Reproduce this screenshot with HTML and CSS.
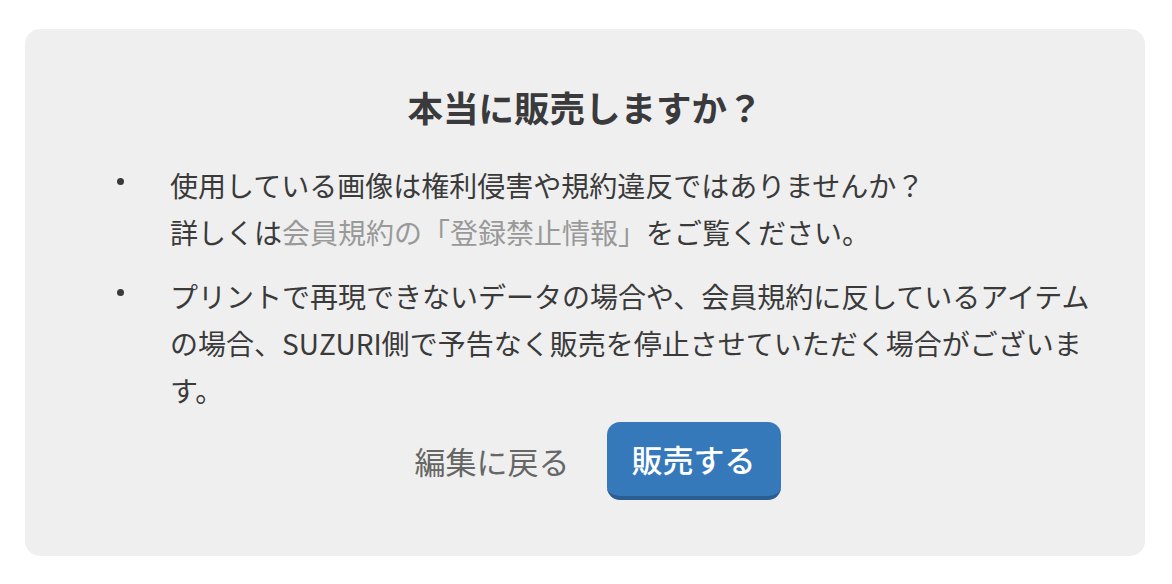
FILE: index.html
```html
<!DOCTYPE html>
<html lang="ja">
<head>
<meta charset="utf-8">
<title>本当に販売しますか？</title>
<link rel="stylesheet" href="styles.css">
</head>
<body>
<div class="card">
  <h1 class="title">本当に販売しますか？</h1>
  <ul class="notes">
    <li class="note"><span class="dot"></span><p class="note-text">使用している画像は権利侵害や規約違反ではありませんか？<br>詳しくは<a class="link" href="#">会員規約の「登録禁止情報」</a>をご覧ください。</p></li>
    <li class="note"><span class="dot"></span><p class="note-text">プリントで再現できないデータの場合や、会員規約に反しているアイテムの場合、SUZURI側で予告なく販売を停止させていただく場合がございます。</p></li>
  </ul>
  <div class="actions">
    <button class="btn btn-back" type="button">編集に戻る</button>
    <button class="btn btn-sell" type="button">販売する</button>
  </div>
</div>
</body>
</html>
```

FILE: styles.css
```css
html, body {
  margin: 0;
  padding: 0;
  background: #ffffff;
}
body {
  padding: 29px 27px 0 25px;
  font-family: "Noto Sans CJK JP", "Noto Sans", sans-serif;
  color: #3a3a3a;
}
.card {
  background: #efefef;
  border-radius: 15px;
  height: 527px;
  box-sizing: border-box;
  padding: 52px 45px 0 45px;
}
.title {
  margin: 0 0 30px 0;
  text-align: center;
  font-size: 35.5px;
  line-height: 51px;
  font-weight: 700;
  color: #3a3a3c;
}
.notes {
  list-style: none;
  margin: 0;
  padding: 0;
  display: flex;
  flex-direction: column;
  gap: 17px;
}
.note {
  display: grid;
  grid-template-columns: 100px 1fr;
}
.dot {
  width: 7px;
  height: 7px;
  border-radius: 50%;
  background: #3a3a3a;
  margin: 16px 0 0 47px;
}
.note-text {
  margin: 0;
  font-size: 28px;
  line-height: 47px;
}
.link {
  color: #999999;
  text-decoration: none;
}
.actions {
  margin-top: 8px;
  display: flex;
  justify-content: center;
  gap: 12px;
}
.btn {
  font-family: "Noto Sans CJK JP", "Noto Sans", sans-serif;
  font-size: 31px;
  height: 78px;
  line-height: 74px;
  padding: 0 25px;
  border: none;
  border-radius: 13px;
  box-sizing: border-box;
  cursor: pointer;
}
.btn-back {
  background: transparent;
  color: #666666;
  font-weight: 400;
}
.btn-sell {
  background: #3679bb;
  color: #ffffff;
  font-weight: 500;
  border-bottom: 4px solid #2b5d92;
}
```
